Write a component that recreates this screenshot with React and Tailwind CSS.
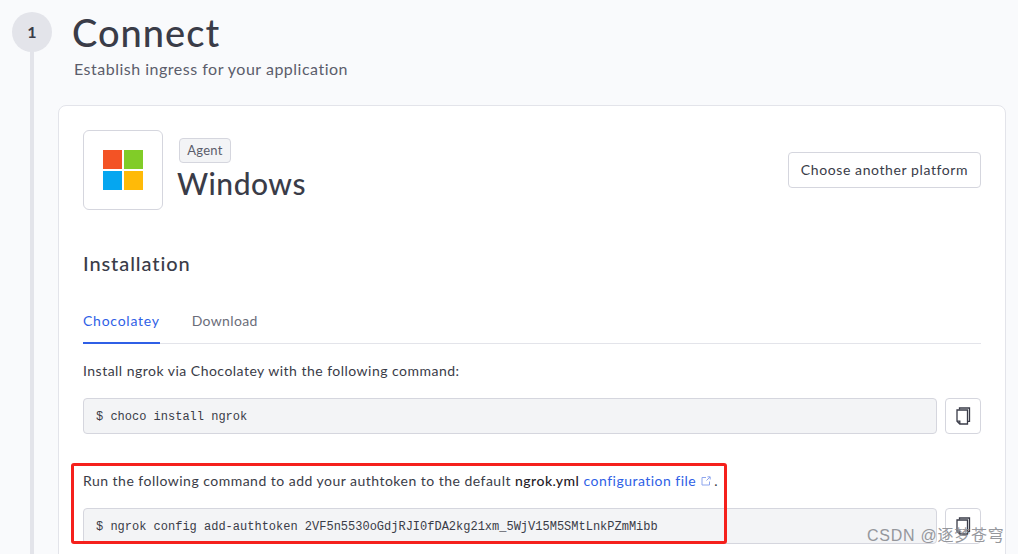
import React from 'react';

function CopyIcon() {
  return (
    <svg width="16" height="18" viewBox="0 0 16 18" fill="none" stroke="#3a3c48" strokeWidth="1.3">
      <path d="M4.5 2.6V1h10v13.4h-2" />
      <path d="M2 3h10.5v14H4.8L2 14.2z" />
      <path d="M2 14.2h2.8V17" />
    </svg>
  );
}

function CodeRow({ children }) {
  return (
    <div className="flex gap-2 h-9">
      <div className="flex-1 flex items-center px-3 pt-px bg-[#f3f4f6] border border-[#d5d6de] rounded font-['Liberation_Mono',monospace] text-[12px] text-[#3a3c48]">
        {children}
      </div>
      <button className="w-9 h-9 flex items-center justify-center bg-white border border-[#d5d6de] rounded">
        <CopyIcon />
      </button>
    </div>
  );
}

function App() {
  return (
    <div className="relative h-[554px] overflow-hidden bg-[#f9fafc] flex font-['Lato',sans-serif] text-[#3a3c48]">
      {/* step rail */}
      <div className="w-[58px] shrink-0 pl-3 pt-3 flex flex-col">
        <div className="w-10 h-10 rounded-full bg-[#e3e4ea] flex items-center justify-center text-[16px] font-bold">1</div>
        <div className="w-1 flex-1 bg-[#e3e4ea] ml-[18px] -mt-px"></div>
      </div>

      <div className="flex-1 pr-3">
        <h1 className="ml-[14px] mt-[10px] h-[44px] text-[38px] leading-[44px] font-medium tracking-[1px]">Connect</h1>
        <p className="ml-4 mt-[5px] h-[20px] text-[16px] leading-5 text-[#5b5d6b] tracking-[0.5px]">Establish ingress for your application</p>

        <div className="mt-[26px] h-[500px] bg-white border border-[#e3e4ea] rounded-lg px-6 pt-6">
          <div className="flex items-start">
            <div className="w-20 h-20 border border-[#d5d6de] rounded-md flex items-center justify-center">
              <svg width="40" height="40" viewBox="0 0 40 40">
                <rect x="0" y="0" width="19" height="19" fill="#f35325" />
                <rect x="21" y="0" width="19" height="19" fill="#81cc28" />
                <rect x="0" y="21" width="19" height="19" fill="#05a6f0" />
                <rect x="21" y="21" width="19" height="19" fill="#ffba08" />
              </svg>
            </div>
            <div className="ml-[14px] mt-2 flex-1 flex flex-col items-start">
              <span className="ml-[2px] w-[52px] h-[25px] pt-px flex items-center justify-center bg-[#f3f4f6] border border-[#d5d6de] rounded text-[13px] tracking-[0.25px] text-[#5b5d6b]">Agent</span>
              <span className="mt-px text-[30px] leading-[38px] font-medium tracking-[0.5px]">Windows</span>
            </div>
            <button className="mt-[22px] h-9 w-[193px] pb-px bg-white border border-[#d5d6de] rounded text-[14px] tracking-[0.6px] text-[#3a3c48]">Choose another platform</button>
          </div>

          <h2 className="mt-10 h-[26px] text-[20px] leading-[26px] font-medium tracking-[0.9px]">Installation</h2>

          <div className="mt-[25px] flex h-[43px] gap-8 border-b border-[#e3e4ea] text-[14px]">
            <span className="h-[43px] border-b-2 border-[#2f5fe6] text-[#2f5fe6] pt-[9px] tracking-[0.75px]">Chocolatey</span>
            <span className="text-[#6b6d79] pt-[9px] tracking-[0.35px]">Download</span>
          </div>

          <p className="mt-[17px] h-5 text-[14px] leading-5 tracking-[0.48px] text-[#3a3c48]">Install ngrok via Chocolatey with the following command:</p>
          <div className="mt-[17px]">
            <CodeRow>$ choco install ngrok</CodeRow>
          </div>

          <div className="mt-[37px] h-5 text-[14px] leading-5 tracking-[0.48px] text-[#3a3c48] flex items-center">
            <span className="whitespace-pre">Run the following command to add your authtoken to the default <span className="font-medium text-[#1f2028]">ngrok.yml</span> <span className="text-[#2f5fe6]">configuration file</span></span>
            <svg className="ml-[5px]" width="10" height="10" viewBox="0 0 10 10" fill="none" stroke="#8ea6ee" strokeWidth="1">
              <path d="M5 1.5H1v7.5h7.5V5.5M5.5 4.5L9 1M6.5 0.8H9.2V3.5" />
            </svg>
            <span className="ml-[3px]">.</span>
          </div>
          <div className="mt-[17px]">
            <CodeRow>$ ngrok config add-authtoken 2VF5n5530oGdjRJI0fDA2kg21xm_5WjV15M5SMtLnkPZmMibb</CodeRow>
          </div>
        </div>
      </div>

      {/* red annotation drawn over the screenshot */}
      <div className="absolute left-[71px] top-[463px] w-[656px] h-[81px] border-[3px] border-[#f5201c] rounded-[3px]"></div>
      {/* watermark */}
      <span className="absolute left-[867px] top-[526px] text-[16px] leading-5 tracking-[0.75px] text-[#8b8d93] opacity-90 font-['Liberation_Sans','Noto_Sans_CJK_SC',sans-serif]">CSDN @逐梦苍穹</span>
    </div>
  );
}

export default App;
